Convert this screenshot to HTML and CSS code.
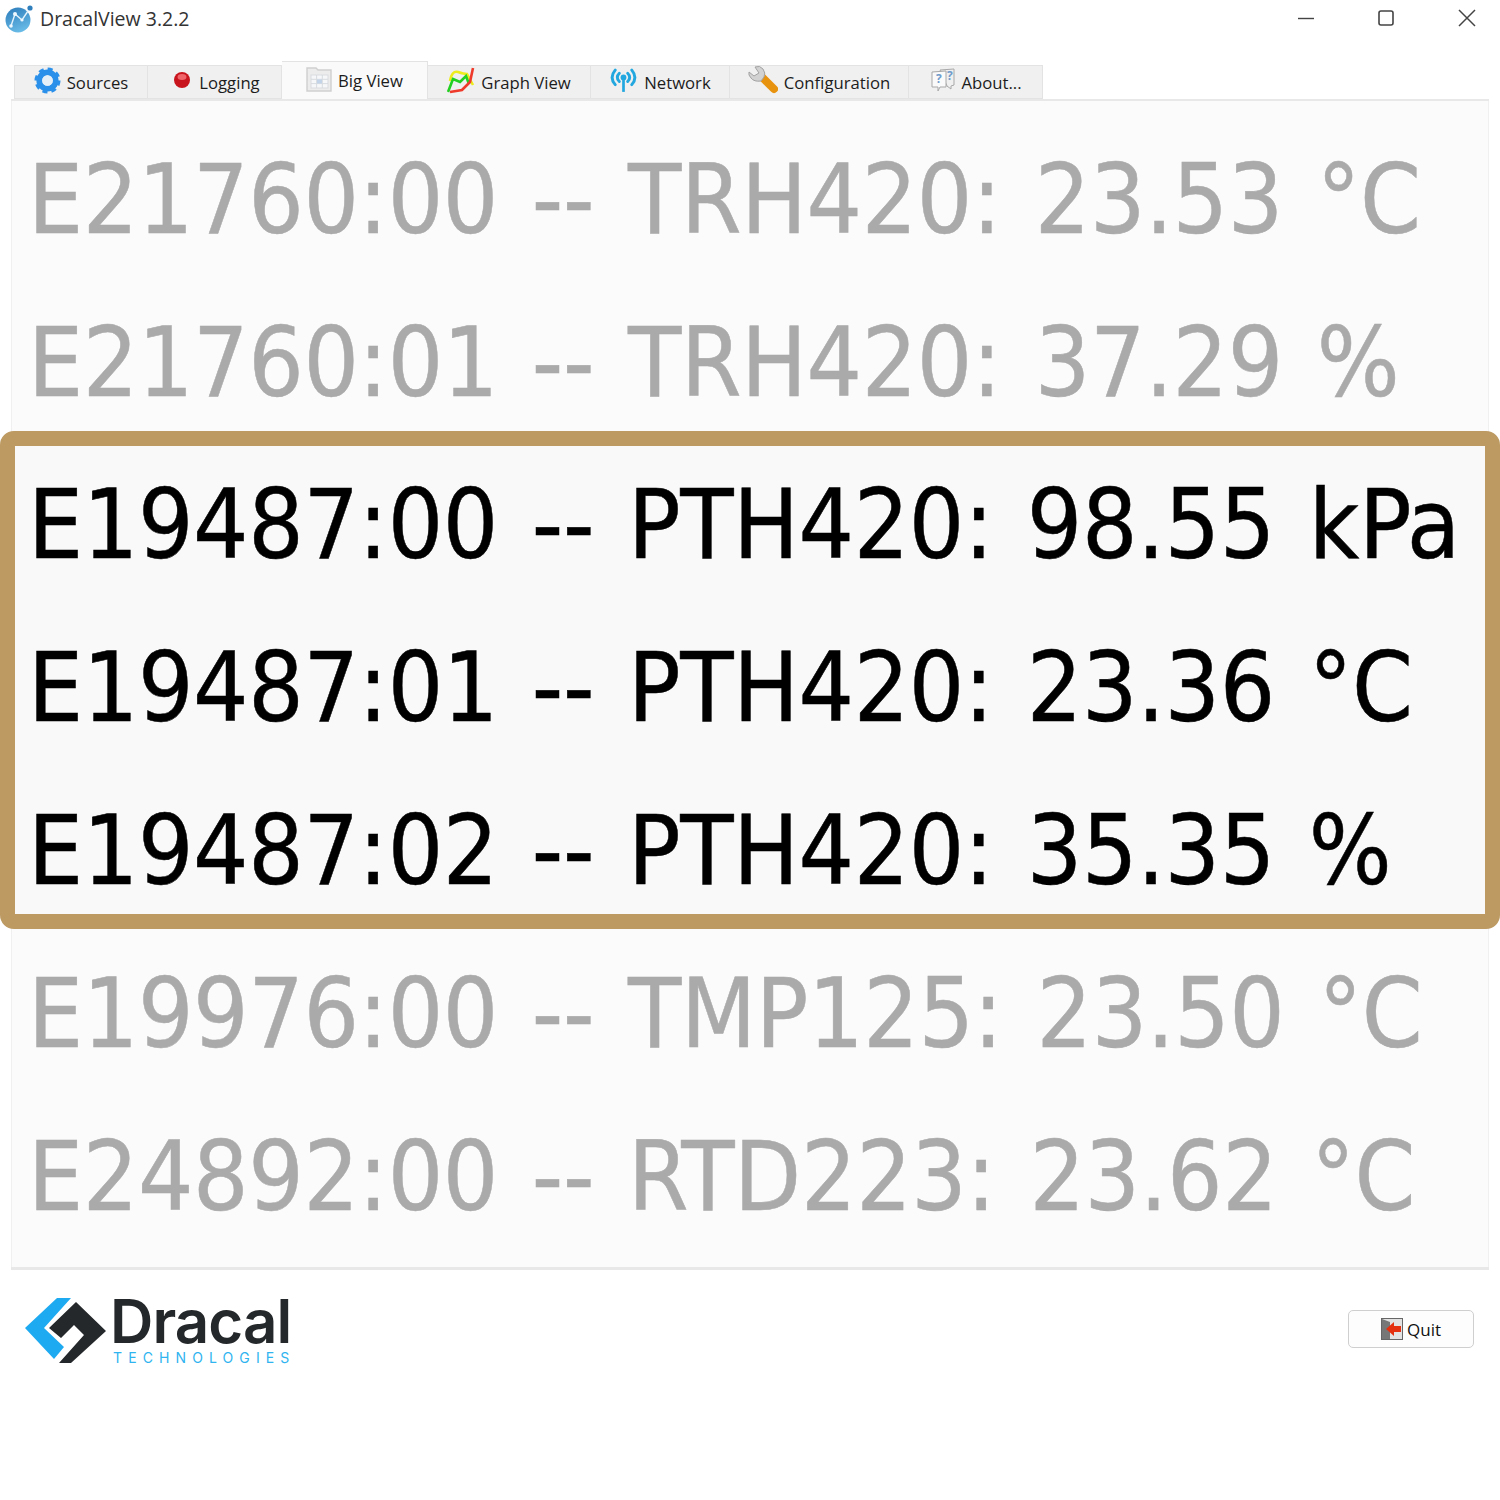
FILE: index.html
```html
<!DOCTYPE html>
<html lang="en">
<head>
    <meta charset="UTF-8">
    <title>DracalView 3.2.2</title>
    <link rel="stylesheet" href="styles.css">
</head>
<body>
    <header class="titlebar">
        <div class="title">
            <svg class="app-icon" width="30" height="30" viewBox="0 0 30 30">
                <defs>
                    <linearGradient id="appBlue" x1="0.2" y1="0" x2="0.6" y2="1">
                        <stop offset="0" stop-color="#2f7fbd"/>
                        <stop offset="1" stop-color="#6bbde8"/>
                    </linearGradient>
                </defs>
                <circle cx="14" cy="17" r="12.5" fill="url(#appBlue)"/>
                <path d="M7 23 L11 11 L18 17 L24 8" fill="none" stroke="#e4f3fc" stroke-width="1.4"/>
                <circle cx="7" cy="23" r="1.8" fill="#eef8fe"/>
                <circle cx="11" cy="11" r="2" fill="#eef8fe"/>
                <circle cx="18" cy="17" r="1.6" fill="#eef8fe"/>
                <circle cx="26" cy="5" r="2.6" fill="#2f7fbd"/>
            </svg>
            <span>DracalView 3.2.2</span>
        </div>
        <div class="window-controls">
            <svg width="16" height="16" viewBox="0 0 16 16"><path d="M0 8.5H16" stroke="#444" stroke-width="1.4"/></svg>
            <svg width="16" height="16" viewBox="0 0 16 16"><rect x="1" y="1" width="14" height="14" rx="2" fill="none" stroke="#444" stroke-width="1.6"/></svg>
            <svg width="18" height="18" viewBox="0 0 18 18"><path d="M1 1L17 17M17 1L1 17" stroke="#444" stroke-width="1.5"/></svg>
        </div>
    </header>

    <nav class="tabs">
        <div class="tab tab-sources">
            <svg width="27" height="27" viewBox="0 0 28 28">
                <circle cx="14" cy="14" r="8.5" fill="none" stroke="#2a90ea" stroke-width="6"/>
                <circle cx="14" cy="14" r="11.5" fill="none" stroke="#2a90ea" stroke-width="4" stroke-dasharray="5 4"/>
                <circle cx="14" cy="14" r="5.5" fill="#e4eff8"/>
            </svg>
            <span>Sources</span>
        </div>
        <div class="tab tab-logging">
            <svg width="18" height="18" viewBox="0 0 18 18">
                <circle cx="9" cy="9" r="8" fill="#c8141c"/>
                <ellipse cx="9" cy="6" rx="4.5" ry="3" fill="#f0656a"/>
            </svg>
            <span>Logging</span>
        </div>
        <div class="tab tab-big active">
            <svg width="26" height="26" viewBox="0 0 26 26">
                <path d="M1 2H10L12 4H25V25H1Z" fill="#ececec" stroke="#cfcfcf" stroke-width="1.4"/>
                <rect x="5" y="9" width="17" height="13" fill="#f6f7f9" stroke="#d8dbdf"/>
                <path d="M5 13.3H22M5 17.6H22M10.6 9V22M16.3 9V22" stroke="#d8dbdf"/>
                <rect x="11" y="13.5" width="5" height="4" fill="#c3d3e8"/>
            </svg>
            <span>Big View</span>
        </div>
        <div class="tab tab-graph">
            <svg width="28" height="28" viewBox="0 0 28 28">
                <path d="M3 15Q5 4 11 6T20 8L26 19" fill="none" stroke="#ecec1e" stroke-width="2.6"/>
                <path d="M1 26L6 13L13 16L19 10L22 18" fill="none" stroke="#22d022" stroke-width="2.6"/>
                <path d="M3 26L15 24L23 16L26 2" fill="none" stroke="#ee3a2a" stroke-width="2.6"/>
            </svg>
            <span>Graph View</span>
        </div>
        <div class="tab tab-network">
            <svg width="29" height="25" viewBox="0 0 28 24">
                <g fill="none" stroke="#22a7df" stroke-width="2.8" stroke-linecap="round">
                    <path d="M6 2Q0 9 6 16M22 2Q28 9 22 16"/>
                    <path d="M10 5Q6 9 10 13M18 5Q22 9 18 13"/>
                </g>
                <circle cx="14" cy="9" r="2.8" fill="#22a7df"/>
                <path d="M14 10V23" stroke="#22a7df" stroke-width="2.6"/>
            </svg>
            <span>Network</span>
        </div>
        <div class="tab tab-config">
            <svg width="30" height="30" viewBox="0 0 30 30">
                <path d="M14 12L26 24" stroke="#e8930f" stroke-width="8" stroke-linecap="round"/>
                <path d="M1 7L6 11L11 8L7 2Q12 0 15 4Q18 8 16 12L13 16Q6 17 3 13Q0 10 1 7Z" fill="#d2d2d2" stroke="#a2a2a2"/>
            </svg>
            <span>Configuration</span>
        </div>
        <div class="tab tab-about">
            <svg width="24" height="24" viewBox="0 0 24 24">
                <path d="M9 2L23 1V17L20 18V21L16 18Z" fill="#f0f0f0" stroke="#a8a8a8"/>
                <path d="M1 4L15 3V19L9 19L7 23V19L1 19Z" fill="#fafafa" stroke="#a8a8a8"/>
                <text class="icon-mark" x="5" y="15">?</text>
                <text class="icon-mark" x="16" y="12">?</text>
            </svg>
            <span>About...</span>
        </div>
    </nav>

    <main class="panel">
        <div class="reading dim">E21760:00 -- TRH420: 23.53 °C</div>
        <div class="reading dim">E21760:01 -- TRH420: 37.29 %</div>
        <section class="group">
            <div class="reading">E19487:00 -- PTH420: 98.55 kPa</div>
            <div class="reading">E19487:01 -- PTH420: 23.36 °C</div>
            <div class="reading">E19487:02 -- PTH420: 35.35 %</div>
        </section>
        <div class="reading dim">E19976:00 -- TMP125: 23.50 °C</div>
        <div class="reading dim">E24892:00 -- RTD223: 23.62 °C</div>
    </main>

    <footer class="bottom">
        <div class="logo">
            <svg class="logo-mark" width="84" height="68" viewBox="0 0 84 68">
                <path d="M1 31L33 1H47L20 31L40 50L30 62Z" fill="#1eaaf1"/>
                <path d="M52 5L82 34L47 66H35L60 38L50 28L37 41L25 31Z" fill="#25282a"/>
            </svg>
            <div class="logo-text">
                <div class="logo-name">Dracal</div>
                <div class="logo-sub">TECHNOLOGIES</div>
            </div>
        </div>
        <button class="quit">
            <svg width="22" height="22" viewBox="0 0 22 22">
                <rect x="0.5" y="0.5" width="21" height="21" fill="#e2e2e2" stroke="#666"/>
                <path d="M1 1L9 4V21H1Z" fill="#777"/>
                <path d="M20 8H13V4L5 11L13 18V14H20Z" fill="#e5300f"/>
            </svg>
            <span>Quit</span>
        </button>
    </footer>
</body>
</html>
```
FILE: styles.css
```css
body {
    margin: 0;
    background: #fff;
    font-family: "Open Sans", "Liberation Sans", sans-serif;
    color: #1c1c1c;
}
.titlebar {
    height: 36px;
    display: flex;
    align-items: center;
    justify-content: space-between;
    padding: 0 24px 0 4px;
}
.title {
    display: flex;
    align-items: center;
    gap: 6px;
    font-size: 19.5px;
    color: #333;
}
.window-controls {
    display: flex;
    align-items: center;
    gap: 64px;
}
.tabs {
    display: flex;
    align-items: flex-end;
    height: 63px;
    padding-left: 14px;
    box-sizing: border-box;
}
.tab {
    height: 34px;
    display: flex;
    align-items: center;
    justify-content: center;
    gap: 6px;
    box-sizing: border-box;
    background: #f0f0f0;
    border: 1px solid #e3e3e3;
    border-left: 0;
    font-size: 16.7px;
    white-space: nowrap;
}
.tab:first-child { border-left: 1px solid #e3e3e3; }
.tab svg {
    flex: none;
    margin-bottom: 4px;
}
.tab.active {
    height: 38px;
    background: #fafafa;
    border-bottom: 0;
}
.tab-sources { width: 134px; }
.tab-logging { width: 134px; padding-left: 4px; gap: 8px; }
.tab-big { width: 146px; }
.tab-graph { width: 163px; }
.tab-network { width: 139px; }
.tab-config { width: 179px; }
.tab-about { width: 134px; padding-left: 2px; }
.icon-mark {
    font-size: 12px;
    font-weight: 700;
    fill: #6f9bcb;
}
.panel {
    margin: 0 11px;
    height: 1171px;
    box-sizing: border-box;
    padding-top: 15px;
    background: #fbfbfb;
    border-top: 2px solid #e8e8e8;
    border-bottom: 3px solid #e8e8e8;
    box-shadow: inset 1px 0 0 #f0f0f0, inset -1px 0 0 #f0f0f0;
}
.reading {
    height: 163px;
    line-height: 167px;
    padding-left: 17px;
    font-family: "DejaVu Sans", sans-serif;
    font-stretch: condensed;
    font-size: 97px;
    letter-spacing: -0.35px;
    word-spacing: 6.5px;
    -webkit-text-stroke: 0.5px currentColor;
    color: #000;
    white-space: nowrap;
}
.reading.dim { color: #aaa; }
.group {
    margin: -11px -11px 1px;
    height: 498px;
    box-sizing: border-box;
    border: 15px solid #bd9a62;
    border-radius: 14px;
    background: #f9f9f9;
}
.group .reading { padding-left: 13px; }
.group .reading:first-child { margin-top: -5px; }
.bottom {
    display: flex;
    align-items: center;
    justify-content: space-between;
    padding: 22px 26px 0 24px;
}
.logo {
    display: flex;
    align-items: flex-start;
    gap: 2px;
}
.logo-mark { margin-top: 5px; }
.logo-name {
    font-family: Inter, sans-serif;
    font-size: 60px;
    line-height: 58px;
    font-weight: 600;
    color: #25282a;
    letter-spacing: -0.9px;
}
.logo-sub {
    margin-left: 3px;
    font-family: Inter, sans-serif;
    font-size: 14px;
    line-height: 16px;
    letter-spacing: 6.1px;
    color: #2fb4f0;
}
.quit {
    width: 126px;
    height: 38px;
    display: flex;
    align-items: center;
    justify-content: center;
    gap: 4px;
    padding: 0;
    background: #fdfdfd;
    border: 1px solid #cfcfcf;
    border-radius: 5px;
    font-family: inherit;
    font-size: 17px;
    color: #111;
}
```
